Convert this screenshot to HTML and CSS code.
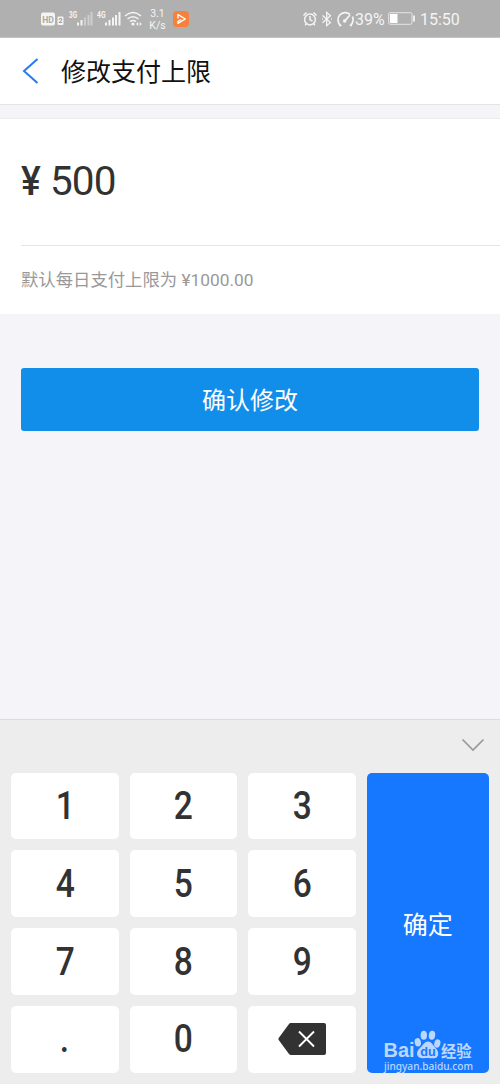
FILE: index.html
```html
<!DOCTYPE html>
<html lang="zh-CN">
<head>
<meta charset="utf-8">
<title>修改支付上限</title>
<link rel="stylesheet" href="styles.css">
</head>
<body>
<div class="screen">
  <div class="status">
    <svg class="status-left" width="110" height="37" viewBox="0 0 110 37">
      <rect x="1" y="12.5" width="14" height="13" rx="2" fill="#f4f4f4"/>
      <text class="hd" x="2.2" y="22.6" textLength="11.6" lengthAdjust="spacingAndGlyphs">HD</text>
      <rect x="17.5" y="16.5" width="6" height="8.5" rx="1.3" fill="#f4f4f4"/>
      <text class="sim" x="18.5" y="23.3">2</text>
      <text class="net" x="29" y="18" textLength="8" lengthAdjust="spacingAndGlyphs">3G</text>
      <path d="M38 22.5v3M41.5 20v5.5" class="bar"/>
      <path d="M45 17.5v8M48.500 15v10.500M51.500 12v13.500" class="bar dim"/>
      <text class="net" x="57" y="18" textLength="8.5" lengthAdjust="spacingAndGlyphs">4G</text>
      <path d="M66 22.5v3M69.500 20v5.500M73 17.500v8M76 15v10.500M79.500 12v13.500" class="bar"/>
      <path d="M85 16q8-7 16 0M87.500 19q5.500-4.600 11 0M90 21.700q3-2.300 6 0" class="line"/>
      <circle cx="93" cy="24" r="1.6" fill="#f4f4f4"/>
      <path d="M96 24l2.200-2v4zM101.800 24l-2.200-2v4z" fill="#f4f4f4"/>
    </svg>
    <div class="speed"><span>3.1</span><span>K/s</span></div>
    <svg class="app" width="16" height="16" viewBox="0 0 16 16">
      <rect width="16" height="16" rx="4" fill="#f7813a"/>
      <path d="M5 7.500V3.500L12.300 8 5 12.300V10.300L8.300 8.500" fill="none" stroke="#fff" stroke-width="1.400" stroke-linejoin="round"/>
    </svg>
    <svg class="status-icons" width="54" height="20" viewBox="0 0 54 20">
      <g class="line">
        <circle cx="8" cy="10.5" r="5.4"/><path d="M8 7v3.700l2.500 1.500M1.500 6.500l3-3M14.500 6.500l-3-3M4.500 14.500l-1.300 1.700M11.500 14.500l1.300 1.700"/>
        <path d="M20.500 6.500l8 7-3.800 3.200V3.500l3.800 3.200-8 7" stroke-width="1.3"/>
        <path d="M38.500 16.300a6.800 6.800 0 1 1 9.500-11M50.500 7.500q1.800 5-1.700 8.600M37 16.300l2.500.2M50 16.300h-2.300M43 11.600l5-5.600" stroke-width="1.700"/>
      </g>
      <circle cx="42.7" cy="12" r="1.8" fill="#f4f4f4"/><path d="M20 10h.8M29 10h.8" class="line"/>
    </svg>
    <span class="percent">39%</span>
    <svg class="battery" width="28" height="14" viewBox="0 0 28 14">
      <rect x=".7" y=".7" width="23.3" height="11.6" rx="1.5" fill="none" stroke="#e6e6e6" stroke-width="1"/>
      <path d="M2 2h7.500v9H2z" fill="#fff"/><path d="M26 3.500v6" stroke="#f4f4f4" stroke-width="1.8"/>
    </svg>
    <span class="clock">15:50</span>
  </div>
  <header class="header">
    <svg class="back" width="18" height="28" viewBox="0 0 18 28"><path d="M15.500 2L2 14l13.500 12" fill="none" stroke="#257cef" stroke-width="2"/></svg>
    <h1>修改支付上限</h1>
  </header>
  <section class="amount-card">
    <div class="amount"><span class="yen">¥</span><span>500</span></div>
    <div class="hint">默认每日支付上限为 ¥1000.00</div>
  </section>
  <div class="action"><button class="submit">确认修改</button></div>
  <div class="keyboard">
    <div class="collapse"><svg width="24" height="14" viewBox="0 0 24 14"><path d="M1.500 1.500L12 12 22.500 1.500" fill="none" stroke="#999" stroke-width="1.700"/></svg></div>
    <div class="keys">
      <button class="key"><span>1</span></button><button class="key"><span>2</span></button><button class="key"><span>3</span></button>
      <button class="ok">确定</button>
      <button class="key"><span>4</span></button><button class="key"><span>5</span></button><button class="key"><span>6</span></button>
      <button class="key"><span>7</span></button><button class="key"><span>8</span></button><button class="key"><span>9</span></button>
      <button class="key"><span>.</span></button><button class="key"><span>0</span></button>
      <button class="key" aria-label="删除"><svg width="48" height="34" viewBox="0 0 48 34"><path d="M12.500 1H46q2 0 2 2v28q0 2-2 2H13q-1 0-2-1L.7 18q-.7-1 0-2L11 2q.7-1 1.500-1z" fill="#323233"/><path d="M21 9.500l15 15M36 9.500l-15 15" stroke="#fff" stroke-width="1.900"/></svg></button>
    </div>
  </div>
  <svg class="watermark" width="100" height="50" viewBox="0 0 100 50">
    <g fill="#bcd7ff">
      <text class="bai" x="1.500" y="33" textLength="31" lengthAdjust="spacingAndGlyphs">Bai</text>
      <ellipse cx="35.800" cy="18.300" rx="3.100" ry="4.200" transform="rotate(-12 35.800 18.300)"/>
      <ellipse cx="41.800" cy="11.300" rx="3.200" ry="4.500"/>
      <ellipse cx="50" cy="11.300" rx="3.200" ry="4.500" transform="rotate(8 50 11.300)"/>
      <ellipse cx="55.300" cy="19.500" rx="3" ry="4.200" transform="rotate(15 55.300 19.500)"/>
      <path d="M46 17.500c4 0 5 4 8 7s3.500 9.500-2 9.800c-3 .1-4-.3-6-.3s-4 .5-7 0c-5-.8-5-6.500-1.500-9.500s4.500-7 8.500-7z"/>
      <text class="jingyan" x="59" y="32.5" textLength="30.5" lengthAdjust="spacingAndGlyphs">经验</text>
      <text class="url" x="2" y="46" textLength="89" lengthAdjust="spacingAndGlyphs">jingyan.baidu.com</text>
    </g>
    <text class="du" x="38.300" y="31.700" textLength="15.500" lengthAdjust="spacingAndGlyphs">du</text>
  </svg>
</div>
</body>
</html>
```
FILE: styles.css
```css
* { box-sizing: border-box; }
body { margin: 0; font-family: Roboto, "Noto Sans CJK SC", sans-serif; }
button { border: 0; padding: 0; font-family: inherit; }
.screen { position: relative; width: 500px; height: 1084px; background: #f4f4f9; display: flex; flex-direction: column; overflow: hidden; }
.status { height: 38px; flex: none; background: #b0b0b0; border-bottom: 1px solid #c4c4c4; display: flex; align-items: center; padding-left: 40px; color: #f4f4f4; }
.status-left { flex: none; }
.hd { font: 700 9.5px Roboto, sans-serif; fill: #aaa; }
.sim { font: 700 7px Roboto, sans-serif; fill: #999; }
.net { font: 700 8.5px Roboto, sans-serif; fill: #f4f4f4; }
.bar { stroke: #f4f4f4; stroke-width: 2; fill: none; }
.dim { stroke: #cecece; }
.line { stroke: #f4f4f4; stroke-width: 1.5; fill: none; }
.speed { width: 30px; margin-left: -4px; margin-right: -3px; padding: 2px 7px 0 0; display: flex; flex-direction: column; align-items: center; font-size: 10.5px; line-height: 12px; white-space: nowrap; }
.app { flex: none; margin-top: 1px; }
.status-icons { margin-left: 113px; flex: none; }
.percent { font-size: 16px; width: 33px; margin-left: -1px; padding-top: 1px; }
.battery { flex: none; margin-top: 1px; }
.clock { font-size: 16px; margin-left: 4px; padding-top: 1px; }
.header { height: 67px; flex: none; background: #fff; border-bottom: 1px solid #e4e4e8; display: flex; align-items: center; padding-left: 22px; }
.header h1 { margin: 0 0 0 21px; padding-top: 3px; font-size: 25px; font-weight: 400; line-height: 36px; color: #111; }
.amount-card { margin-top: 13px; height: 196px; flex: none; background: #fff; border-top: 1px solid #ebebef; padding-left: 21px; }
.amount { height: 127px; border-bottom: 1px solid #e5e5e5; display: flex; align-items: center; font-size: 40.5px; line-height: 48px; color: #323233; padding-bottom: 3px; letter-spacing: -.9px; }
.yen { width: 29px; font-weight: 500; transform: scaleX(.92); transform-origin: left; }
.hint { height: 67px; padding-bottom: 2px; display: flex; align-items: center; color: #999; font-size: 17.35px; white-space: pre; }
.action { padding: 54px 21px 0; }
.submit { display: block; width: 458px; height: 63px; padding-bottom: 2px; border-radius: 3px; background: #118eea; color: #fff; font-size: 24px; }
.keyboard { margin-top: auto; height: 365px; background: #ededed; border-top: 1px solid #dcdce0; padding: 0 11px; }
.collapse { height: 52.5px; display: flex; justify-content: flex-end; align-items: center; padding: 0 4px 2px 0; }
.keys { display: grid; grid-template-columns: 107.5px 107.5px 107.5px 122.5px; grid-template-rows: repeat(4, 66.7px); gap: 11.2px 11px; }
.key { background: #fff; border-radius: 5px; display: flex; align-items: center; justify-content: center; color: #323233; font-size: 39.5px; font-weight: 500; line-height: 46px; }
.key span { transform: scaleX(.85); }
.ok { grid-column: 4; grid-row: 1 / 5; border-radius: 5px; background: #1677ff; color: #fff; font-size: 25px; }
.watermark { position: absolute; left: 382px; top: 1024px; }
.bai { font: 700 20.5px "Liberation Sans", sans-serif; }
.jingyan { font: 700 16px "Noto Sans CJK SC", sans-serif; }
.url { font: 500 10.5px "Noto Sans", sans-serif; }
.du { font: 700 13.5px "Liberation Sans", sans-serif; fill: #1677ff; }
```
